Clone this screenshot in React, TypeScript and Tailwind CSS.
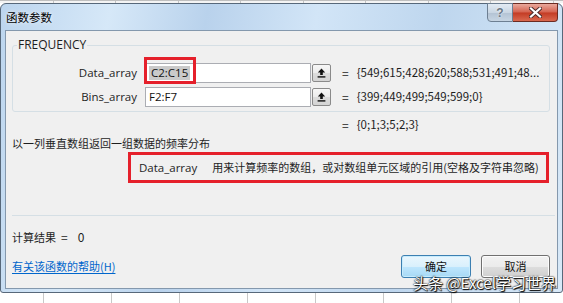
import React from 'react';

function PickButton() {
  return (
    <button className="ml-px w-[19px] h-[18px] flex items-center justify-center rounded-[2px] border border-[#8a8a8a] bg-[linear-gradient(#f7f7f7,#ececec_48%,#dcdcdc_52%,#d4d4d4)]">
      <svg width="9" height="10" viewBox="0 0 9 10">
        <path d="M4.5 0.6 L0.8 4.4 H3.2 V7 H5.8 V4.4 H8.2 Z" fill="#111" />
        <rect x="0.6" y="8.2" width="7.8" height="1.4" fill="#111" />
      </svg>
    </button>
  );
}

function ArgRow({ label, value, result, marked }: { label: string; value: string; result: string; marked?: boolean }) {
  return (
    <div className="flex items-center h-[20px]">
      <span className="w-[124px] text-right text-[11.5px] font-['Open_Sans',sans-serif] text-[#1e1e1e]">{label}</span>
      <div className="relative ml-[8px] w-[166px] h-[20px] bg-white border border-[#abadb3] flex items-center pl-[3px] text-[11.5px] font-['Open_Sans',sans-serif] text-[#111]">
        {marked ? <span className="bg-[#cacaca] px-[2px] leading-[14px]">{value}</span> : <span>{value}</span>}
        {marked && <div className="absolute left-[-2px] top-[-7px] w-[52px] h-[27px] border-[3px] border-[#e5202b]" />}
      </div>
      <PickButton />
      <span className="ml-[11px] text-[12px] font-['Noto_Sans_CJK_SC',sans-serif]">=</span>
      <span className="ml-[8px] text-[11.5px] font-['Noto_Sans_CJK_SC',sans-serif] text-[#1e1e1e] whitespace-nowrap">{result}</span>
    </div>
  );
}

export default function App() {
  return (
    <div className="w-[563px] h-[303px] overflow-hidden flex flex-col bg-white font-['Noto_Sans_CJK_SC',sans-serif] text-[#1e1e1e]">
      <div className="h-[3px] shrink-0 border-t border-[#bfbfbf] bg-[repeating-linear-gradient(90deg,#f4f4f4_0,#f4f4f4_53px,#c4c4c4_53px,#c4c4c4_54px,#f4f4f4_54px,#f4f4f4_62.5px)]" />
      <div className="w-[563px] h-[290px] shrink-0 flex flex-col rounded-t-[6px] rounded-b-[3px] border border-[#57687a] px-[4px] pb-[3px] bg-[linear-gradient(100deg,#bcd5ee_0%,#d6e8f8_18%,#b9d2ec_34%,#d2e5f7_52%,#bed6ee_72%,#d8e9f8_100%)]">
        <div className="h-[26px] flex items-start justify-between">
          <span className="mt-[5px] ml-px text-[11.5px] leading-[16px] text-black [text-shadow:0_0_4px_#fff]">函数参数</span>
          <div className="flex -mt-px">
            <div className="w-[26px] h-[19px] flex items-center justify-center rounded-bl-[4px] border border-[#6d7f92] bg-[linear-gradient(#e2ebf4,#c9d6e3_50%,#b3c3d4_52%,#c7d5e3)]">
              <span className="text-[12px] font-bold leading-none text-[#6a7885] [text-shadow:0_0_2px_#fff] font-['Liberation_Sans',sans-serif]">?</span>
            </div>
            <div className="w-[45px] h-[19px] flex items-center justify-center rounded-br-[4px] border border-l-0 border-[#6b2b22] bg-[linear-gradient(#e9a99c,#d4624f_48%,#c33b24_52%,#d9684f)]">
              <svg width="13" height="11" viewBox="0 0 13 11">
                <path d="M2 1.5 L11 9.5 M11 1.5 L2 9.5" stroke="#4a2b2b" strokeWidth="4" strokeLinecap="square" />
                <path d="M2 1.5 L11 9.5 M11 1.5 L2 9.5" stroke="#fff" strokeWidth="2.2" strokeLinecap="square" />
              </svg>
            </div>
          </div>
        </div>

        <div className="relative flex-1 flex flex-col bg-[#f0f0f0] border border-[#8498ad] pl-[6px] pr-[7px]">
          <fieldset className="mt-[6px] border border-[#d5dfe5] rounded-[3px] px-0 pb-[4px] pt-0">
            <legend className="ml-[4px] px-px text-[12px] leading-[16px] font-['Open_Sans',sans-serif] text-[#1e1e1e]">FREQUENCY</legend>
            <div className="mt-[10px] flex flex-col gap-[4px]">
              <ArgRow label="Data_array" value="C2:C15" result="{549;615;428;620;588;531;491;48..." marked />
              <ArgRow label="Bins_array" value="F2:F7" result="{399;449;499;549;599;0}" />
            </div>
          </fieldset>

          <div className="mt-[5px] pl-[330px] flex items-center h-[16px] whitespace-nowrap">
            <span className="text-[12px]">=</span>
            <span className="ml-[8px] text-[11.5px]">{'{0;1;3;5;2;3}'}</span>
          </div>

          <div className="mt-[2px] text-[11px] leading-[16px]">以一列垂直数组返回一组数据的频率分布</div>

          <div className="mt-px ml-[116px] w-[421px] h-[31px] border-[3px] border-[#e5202b] flex items-center pl-[8px] whitespace-nowrap">
            <span className="text-[11.5px] font-['Open_Sans',sans-serif]">Data_array</span>
            <span className="ml-[15px] text-[11px]">用来计算频率的数组，或对数组单元区域的引用(空格及字符串忽略)</span>
          </div>

          <div className="mt-[32px] h-px bg-[#d5dfe5] -mr-[5px]" />

          <div className="mt-[13px] h-[16px] flex items-center text-[11px] whitespace-nowrap">
            <span>计算结果</span>
            <span className="ml-[5px] text-[12px]">=</span>
            <span className="ml-[10px] text-[12px]">0</span>
          </div>

          <div className="mt-[10px] flex items-center justify-between">
            <a className="text-[11px] text-[#0066cc] underline underline-offset-2 cursor-pointer">有关该函数的帮助(H)</a>
            <div className="flex gap-[10px]">
              <button className="w-[70px] h-[23px] rounded-[3px] border border-[#3c7fb1] bg-[linear-gradient(#eaf6fd,#d9f0fc_50%,#bee6fd_52%,#a7d9f5)] shadow-[inset_0_0_0_1px_#c7ecfd] text-[11px] text-[#111]">确定</button>
              <button className="w-[69px] h-[23px] rounded-[3px] border border-[#707070] bg-[linear-gradient(#f2f2f2,#ebebeb_50%,#dddddd_52%,#cfcfcf)] shadow-[inset_0_0_0_1px_#fcfcfc] text-[11px] text-[#111]">取消</button>
            </div>
          </div>

          <div className="absolute left-[407px] top-[242px] text-[15px] leading-[20px] text-white whitespace-nowrap [text-shadow:0_0_2px_#000,1px_1px_1px_#000,0_0_1px_#000]">头条 @Excel学习世界</div>
        </div>
      </div>
      <div className="flex-1 bg-[repeating-linear-gradient(90deg,#ffffff_0,#ffffff_43px,#c8c8c8_43px,#c8c8c8_44px,#ffffff_44px,#ffffff_68px)]" />
    </div>
  );
}
